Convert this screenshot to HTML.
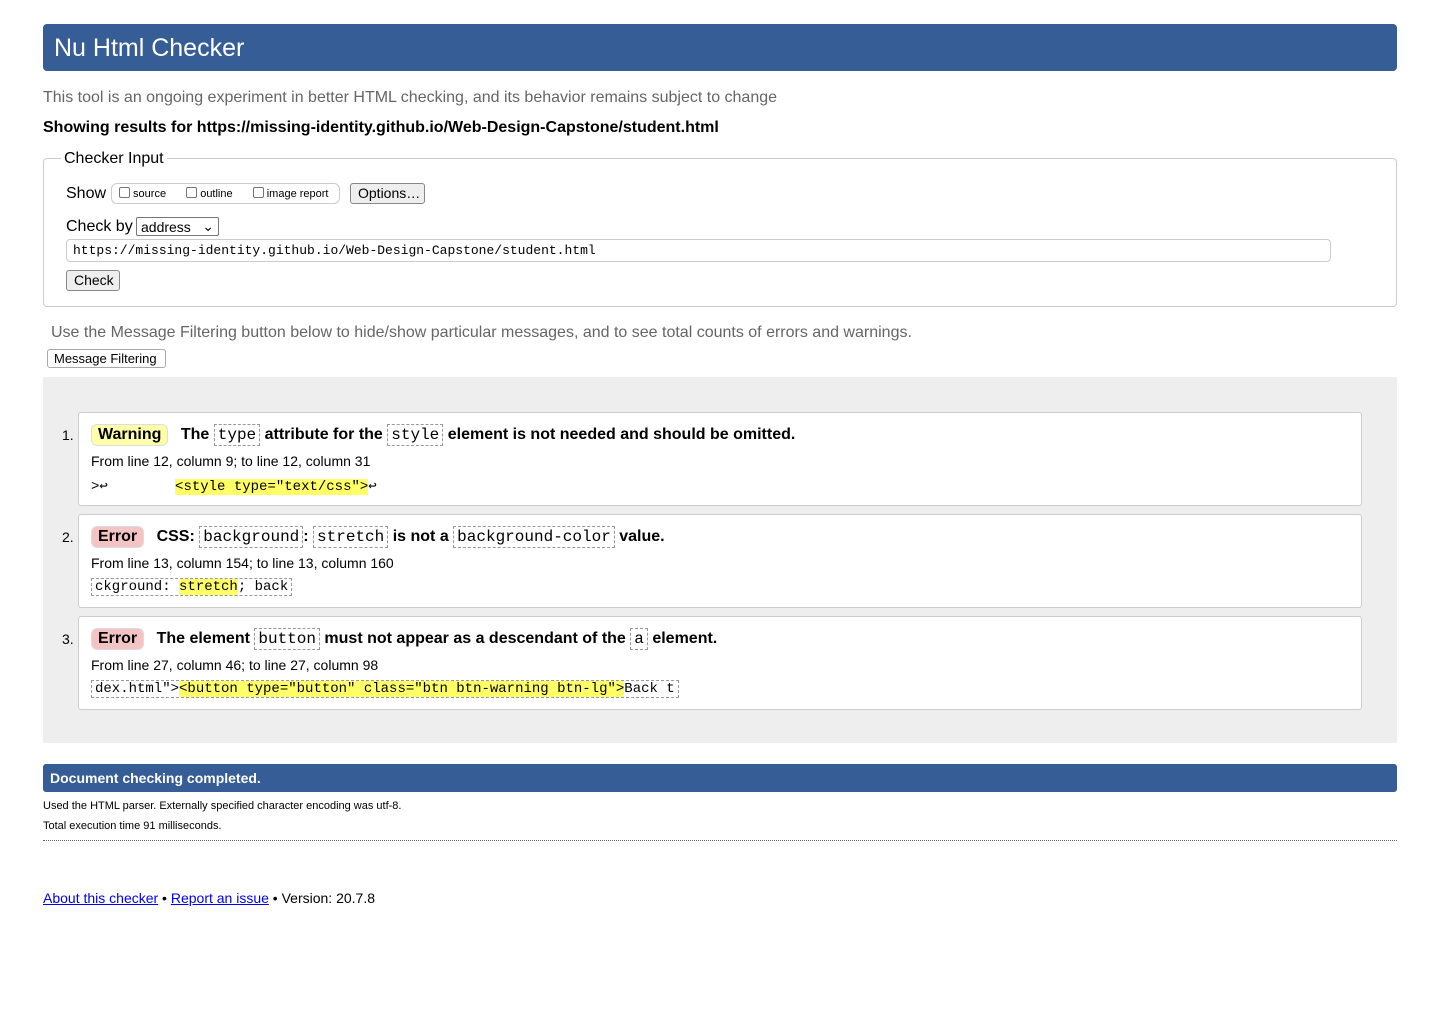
<!DOCTYPE html>
<html><head><meta charset="utf-8"><style>
*{box-sizing:border-box}
body{margin:0;width:1440px;height:1013px;background:#fff;font-family:"Liberation Sans",Arial,sans-serif;color:#000;position:relative;overflow:hidden}
.a{position:absolute;white-space:nowrap}
.hdr{left:43px;top:24px;width:1354px;height:47px;background:#365d95;border-radius:4px;color:#fff;font-size:25px;padding:10px 0 0 11px}
.fs{left:43px;top:158px;width:1354px;height:149px;border:1px solid #ccc;border-radius:4px}
.btn{border:1px solid #888;background:#eee;border-radius:3px;font-size:14px;padding:1px 7px}
code,.m{font-family:"Liberation Mono",monospace}
.msgs{left:43px;top:377px;width:1354px;height:366px;background:#eee}
.box{position:absolute;left:35px;width:1284px;background:#fff;border:1px solid #ccc;border-radius:3px}
.t{position:absolute;left:12px;top:11px;font-size:16px;font-weight:bold;white-space:nowrap}
.t code{font-weight:normal;border:1px dashed #999;padding:1px 3px;font-size:16px}
.lab{display:inline-block;padding:1px 6px;border-radius:6px;margin-right:8px;border:1px solid #ddd}
.ln{position:absolute;left:12px;top:40px;font-size:14px}
.ex{position:absolute;left:12px;top:65px;font-size:14px;font-family:"Liberation Mono",monospace;white-space:pre}
.hl{background:#ff6}
.num{position:absolute;left:-17px;top:14px;font-size:14px}
</style></head><body>
<div class="a hdr">Nu Html Checker</div>
<div class="a" style="left:43px;top:89px;font-size:16px;color:#666">This tool is an ongoing experiment in better HTML checking, and its behavior remains subject to change</div>
<div class="a" style="left:43px;top:119px;font-size:16px;font-weight:bold">Showing results for https://missing-identity.github.io/Web-Design-Capstone/student.html</div>
<div class="a fs"></div>
<div class="a" style="left:61px;top:150px;background:#fff;padding:0 3px;font-size:16px">Checker Input</div>
<div class="a" style="left:66px;top:185px;font-size:16px">Show</div>
<div class="a" style="left:111px;top:183px;width:229px;height:21px;border:1px solid #ccc;border-radius:6px;font-size:11px;padding-top:3px">
<span style="display:inline-block;width:11px;height:11px;border:1px solid #777;border-radius:2px;margin-left:7px;vertical-align:-1px"></span> source
<span style="display:inline-block;width:11px;height:11px;border:1px solid #777;border-radius:2px;margin-left:17px;vertical-align:-1px"></span> outline
<span style="display:inline-block;width:11px;height:11px;border:1px solid #777;border-radius:2px;margin-left:17px;vertical-align:-1px"></span> image report</div>
<div class="a btn" style="left:350px;top:183px;height:21px;width:75px">Options…</div>
<div class="a" style="left:66px;top:218px;font-size:16px">Check by</div>
<div class="a" style="left:136px;top:217px;width:83px;height:19px;border:1px solid #777;border-radius:2px;font-size:14px;padding:1px 4px">address<span style="position:absolute;right:4px;top:0">⌄</span></div>
<div class="a m" style="left:66px;top:239px;width:1265px;height:23px;border:1px solid #ccc;border-radius:4px;font-size:13px;padding:3px 6px">https://missing-identity.github.io/Web-Design-Capstone/student.html</div>
<div class="a btn" style="left:66px;top:270px;height:21px;width:54px">Check</div>
<div class="a" style="left:51px;top:324px;font-size:16px;color:#666">Use the Message Filtering button below to hide/show particular messages, and to see total counts of errors and warnings.</div>
<div class="a btn" style="left:47px;top:349px;height:19px;font-size:13px;padding:1px 6px;border-color:#aaa;background:#fff;width:119px">Message Filtering</div>
<div class="a msgs">
<div class="box" style="top:35px;height:94px"><span class="num">1.</span>
<div class="t"><span class="lab" style="background:#ffa">Warning</span> The <code>type</code> attribute for the <code>style</code> element is not needed and should be omitted.</div>
<div class="ln">From line 12, column 9; to line 12, column 31</div>
<div class="ex">&gt;↩        <span class="hl">&lt;style type="text/css"&gt;</span>↩</div></div>
<div class="box" style="top:137px;height:94px"><span class="num">2.</span>
<div class="t"><span class="lab" style="background:#f4c4c4">Error</span> CSS: <code>background</code>: <code>stretch</code> is not a <code>background-color</code> value.</div>
<div class="ln">From line 13, column 154; to line 13, column 160</div>
<div class="ex" style="border:1px dashed #999;padding:0 3px;left:12px;top:63px">ckground: <span class="hl">stretch</span>; back</div></div>
<div class="box" style="top:239px;height:94px"><span class="num">3.</span>
<div class="t"><span class="lab" style="background:#f4c4c4">Error</span> The element <code>button</code> must not appear as a descendant of the <code>a</code> element.</div>
<div class="ln">From line 27, column 46; to line 27, column 98</div>
<div class="ex" style="border:1px dashed #999;padding:0 3px;left:12px;top:63px">dex.html"&gt;<span class="hl">&lt;button type="button" class="btn btn-warning btn-lg"&gt;</span>Back t</div></div>
</div>
<div class="a" style="left:43px;top:764px;width:1354px;height:28px;background:#365d95;border-radius:3px;color:#fff;font-weight:bold;font-size:14px;padding:6px 7px">Document checking completed.</div>
<div class="a" style="left:43px;top:800px;font-size:11px">Used the HTML parser. Externally specified character encoding was utf-8.</div>
<div class="a" style="left:43px;top:820px;font-size:11px">Total execution time 91 milliseconds.</div>
<div class="a" style="left:43px;top:840px;width:1354px;border-top:1px dotted #666"></div>
<div class="a" style="left:43px;top:890px;font-size:14px"><span style="color:#00e;text-decoration:underline">About this checker</span> • <span style="color:#00e;text-decoration:underline">Report an issue</span> • Version: 20.7.8</div>
</body></html>
